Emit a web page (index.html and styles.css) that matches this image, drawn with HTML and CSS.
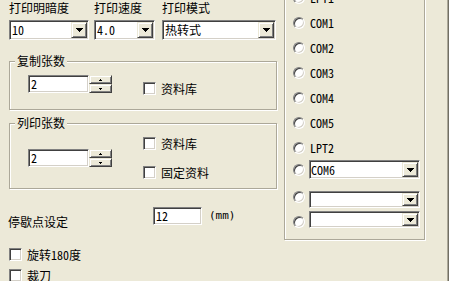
FILE: index.html
```html
<!DOCTYPE html>
<html lang="zh-CN">
<head>
<meta charset="utf-8">
<title>打印设置</title>
<link rel="stylesheet" href="styles.css">
</head>
<body>
<div class="window">
  <div class="left">
    <div class="top-row">
      <div class="field f1">
        <div class="lbl">打印明暗度</div>
        <div class="combo"><span class="val">10</span><span class="dd raised"><svg width="7" height="4" viewBox="0 0 7 4"><path d="M0 0H7V1H6V2H5V3H4V4H3V3H2V2H1V1H0Z"/></svg></span></div>
      </div>
      <div class="field f2">
        <div class="lbl">打印速度</div>
        <div class="combo"><span class="val">4.0</span><span class="dd raised"><svg width="7" height="4" viewBox="0 0 7 4"><path d="M0 0H7V1H6V2H5V3H4V4H3V3H2V2H1V1H0Z"/></svg></span></div>
      </div>
      <div class="field f3">
        <div class="lbl">打印模式</div>
        <div class="combo"><span class="val">热转式</span><span class="dd raised"><svg width="7" height="4" viewBox="0 0 7 4"><path d="M0 0H7V1H6V2H5V3H4V4H3V3H2V2H1V1H0Z"/></svg></span></div>
      </div>
    </div>

    <div class="group g1">
      <div class="gtitle">复制张数</div>
      <div class="grow">
        <div class="spin">
          <div class="spin-input">2</div>
          <div class="spin-btns">
            <span class="sb raised"><svg width="3" height="2" viewBox="0 0 3 2"><path d="M1 0H2V1H3V2H0V1H1Z"/></svg></span>
            <span class="sb raised"><svg width="3" height="2" viewBox="0 0 3 2"><path d="M0 0H3V1H2V2H1V1H0Z"/></svg></span>
          </div>
        </div>
        <div class="checks c1">
          <div class="check"><span class="box"></span><span>资料库</span></div>
        </div>
      </div>
    </div>

    <div class="group g2">
      <div class="gtitle">列印张数</div>
      <div class="grow">
        <div class="spin sp2">
          <div class="spin-input">2</div>
          <div class="spin-btns">
            <span class="sb raised"><svg width="3" height="2" viewBox="0 0 3 2"><path d="M1 0H2V1H3V2H0V1H1Z"/></svg></span>
            <span class="sb raised"><svg width="3" height="2" viewBox="0 0 3 2"><path d="M0 0H3V1H2V2H1V1H0Z"/></svg></span>
          </div>
        </div>
        <div class="checks c2">
          <div class="check"><span class="box"></span><span>资料库</span></div>
          <div class="check second"><span class="box"></span><span>固定资料</span></div>
        </div>
      </div>
    </div>

    <div class="stop">
      <div class="stop-lbl">停歇点设定</div>
      <div class="num">12</div>
      <div class="unit">(mm)</div>
    </div>

    <div class="check opt rot"><span class="box"></span><span>旋转180度</span></div>
    <div class="check opt cut"><span class="box"></span><span>裁刀</span></div>
  </div>

  <div class="right">
    <div class="group ports">
      <div class="prow"><span class="radio"></span><span class="ptext">LPT1</span></div>
      <div class="prow"><span class="radio"></span><span class="ptext">COM1</span></div>
      <div class="prow"><span class="radio"></span><span class="ptext">COM2</span></div>
      <div class="prow"><span class="radio"></span><span class="ptext">COM3</span></div>
      <div class="prow"><span class="radio"></span><span class="ptext">COM4</span></div>
      <div class="prow"><span class="radio"></span><span class="ptext">COM5</span></div>
      <div class="prow"><span class="radio"></span><span class="ptext">LPT2</span></div>
      <div class="crow r6"><span class="radio"></span><div class="combo pc"><span class="val">COM6</span><span class="dd raised"><svg width="7" height="4" viewBox="0 0 7 4"><path d="M0 0H7V1H6V2H5V3H4V4H3V3H2V2H1V1H0Z"/></svg></span></div></div>
      <div class="crow r7"><span class="radio top"></span><div class="combo pc sm"><span class="val"></span><span class="dd raised"><svg width="7" height="4" viewBox="0 0 7 4"><path d="M0 0H7V1H6V2H5V3H4V4H3V3H2V2H1V1H0Z"/></svg></span></div></div>
      <div class="crow r8"><span class="radio bottom"></span><div class="combo pc sm"><span class="val"></span><span class="dd raised"><svg width="7" height="4" viewBox="0 0 7 4"><path d="M0 0H7V1H6V2H5V3H4V4H3V3H2V2H1V1H0Z"/></svg></span></div></div>
    </div>
  </div>
</div>
</body>
</html>
```

FILE: styles.css
```css
html, body {
  margin: 0;
  padding: 0;
}

body {
  width: 449px;
  height: 281px;
  overflow: hidden;
  background: #ECE9D8;
  color: #000;
  font-family: "Noto Sans Mono CJK SC", "Noto Sans CJK SC", "DejaVu Sans", sans-serif;
  font-size: 12px;
  line-height: 14px;
}

.window {
  display: flex;
  width: 449px;
  height: 281px;
  box-sizing: border-box;
  border-right: 1px solid #716F64;
  box-shadow: inset -1px 0 0 #ACA899;
}

.left {
  width: 284px;
  flex: none;
}

/* top row of labelled combos */
.top-row {
  display: flex;
  padding: 1px 0 0 9px;
}

.field {
  display: flex;
  flex-direction: column;
}

.f1 { width: 80px; margin-right: 5px; }
.f2 { width: 61px; margin-right: 7px; }
.f3 { width: 114px; }

.lbl {
  height: 14px;
  margin-bottom: 5px;
}

/* sunken field */
.combo, .spin-input, .num, .box {
  box-sizing: border-box;
  background: #fff;
  border: 1px solid;
  border-color: #808080 #fff #fff #808080;
  box-shadow: inset 1px 1px 0 #404040, inset -1px -1px 0 #D4D0C8;
}

.combo {
  height: 20px;
  padding: 1px;
  display: flex;
  align-items: center;
}

.combo .val {
  flex: 1;
  padding-left: 1px;
  line-height: 14px;
  white-space: nowrap;
}

.raised {
  box-sizing: border-box;
  background: #ECE9D8;
  border: 1px solid;
  border-color: #ECE9D8 #404040 #404040 #ECE9D8;
  box-shadow: inset 1px 1px 0 #fff, inset -1px -1px 0 #808080;
  display: flex;
  align-items: center;
  justify-content: center;
}

.dd {
  width: 16px;
  height: 16px;
  flex: none;
}

.raised svg {
  display: block;
  fill: #000;
  shape-rendering: crispEdges;
}

/* group boxes */
.group {
  box-sizing: border-box;
  border: 1px solid #ACA899;
  box-shadow: inset 1px 1px 0 #fff, 1px 1px 0 #fff;
  display: flex;
  flex-direction: column;
}

.gtitle {
  align-self: flex-start;
  margin: -8px 0 0 5px;
  padding: 0 2px;
  background: #ECE9D8;
  line-height: 14px;
}

.g1 {
  margin: 21px 0 0 9px;
  width: 268px;
  height: 49px;
}

.g2 {
  margin: 13px 0 0 9px;
  width: 268px;
  height: 66px;
}

.grow {
  display: flex;
  align-items: flex-start;
  margin-top: 7px;
  padding-left: 18px;
}

.spin {
  display: flex;
}

.sp2 {
  margin-top: 12px;
}

.spin-input {
  width: 61px;
  height: 18px;
  padding: 1px 0 0 2px;
  line-height: 14px;
}

.spin-btns {
  width: 23px;
  height: 18px;
  display: flex;
  flex-direction: column;
}

.sb {
  height: 9px;
}

.checks {
  margin-left: 31px;
  display: flex;
  flex-direction: column;
}

.c1 {
  margin-top: 7px;
}

.check {
  display: flex;
  align-items: center;
  height: 13px;
  line-height: 14px;
}

.check .box {
  width: 13px;
  height: 13px;
  flex: none;
  margin-right: 5px;
}

.check.second {
  margin-top: 16px;
}

/* stop point row */
.stop {
  display: flex;
  align-items: flex-start;
  margin-top: 18px;
  padding-left: 8px;
}

.stop-lbl {
  width: 145px;
  margin-top: 8px;
}

.num {
  width: 49px;
  height: 18px;
  padding: 1px 0 0 2px;
  line-height: 14px;
}

.unit {
  margin: 2px 0 0 7px;
  font-size: 11px;
  color: #000;
  font-family: "DejaVu Sans Mono", monospace;
}

.opt {
  padding-left: 9px;
}

.rot { margin-top: 19px; }
.cut { margin-top: 8px; }

/* right port group */
.right {
  width: 141px;
  flex: none;
}

.ports {
  margin-top: -30px;
  height: 270px;
  padding: 14px 0 0 8px;
}

.radio {
  width: 12px;
  height: 12px;
  flex: none;
  box-sizing: border-box;
  border-radius: 50%;
  background: #fff;
  border: 1px solid;
  border-color: #808080 #fff #fff #808080;
  box-shadow: inset 1px 1px 0 #404040, inset -1px -1px 0 #D4D0C8;
}

.prow {
  height: 25px;
  display: flex;
  align-items: center;
}

.prow .radio {
  margin-right: 5px;
}

.crow {
  display: flex;
  align-items: center;
}

.crow .radio {
  margin-right: 4px;
}

.pc {
  width: 111px;
  height: 19px;
}

.pc .val {
  padding-left: 0;
}

.pc .dd {
  height: 15px;
}

.pc.sm {
  height: 17px;
}

.pc.sm .dd {
  height: 13px;
}

.r7 { margin-top: 12px; }
.r8 { margin-top: 3px; }

.radio.top { align-self: flex-start; }
.radio.bottom { align-self: flex-end; }
```
